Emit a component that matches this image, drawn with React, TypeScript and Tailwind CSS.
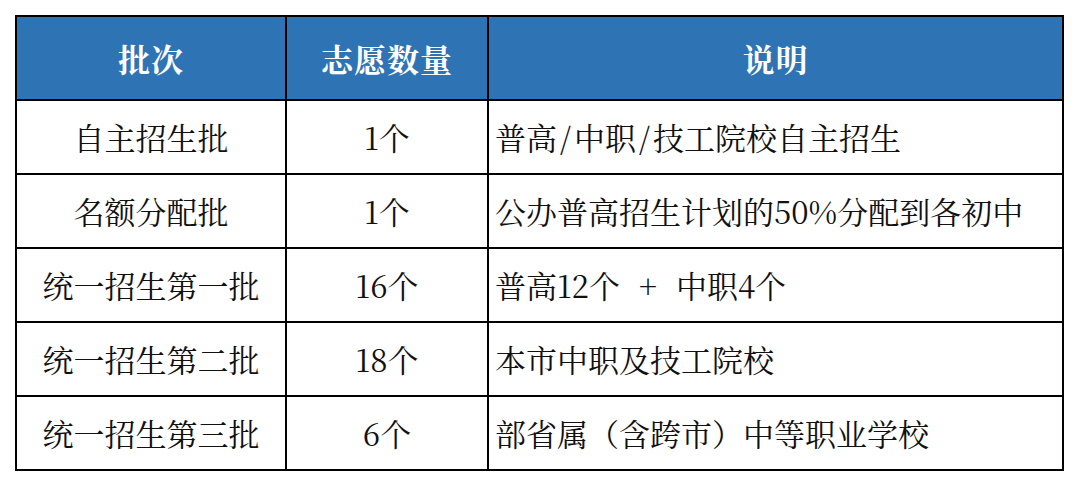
import React from "react";

const font = {
  fontFamily:
    '"Noto Serif CJK SC", "Liberation Serif", "Noto Sans CJK SC", serif',
};

const Slash = () => <span className="inline-block w-[17px] text-center">/</span>;

const rows: [string, string, React.ReactNode][] = [
  [
    "自主招生批",
    "1个",
    <>
      普高<Slash />中职<Slash />技工院校自主招生
    </>,
  ],
  ["名额分配批", "1个", "公办普高招生计划的50%分配到各初中"],
  [
    "统一招生第一批",
    "16个",
    <>
      普高12个<span className="inline-block w-[56px] text-center">+</span>中职4个
    </>,
  ],
  ["统一招生第二批", "18个", "本市中职及技工院校"],
  ["统一招生第三批", "6个", "部省属（含跨市）中等职业学校"],
];

export default function App() {
  return (
    <div className="w-[1080px] h-[486px] bg-white pt-[15px] pl-[15px]" style={font}>
      <div className="grid grid-cols-[268px_200px_573px] auto-rows-[72px] grid-rows-[82px] gap-[2px] bg-black p-[2px] w-[1049px]">
        {["批次", "志愿数量", "说明"].map((h) => (
          <div
            key={h}
            className="bg-[#2e74b5] flex items-center justify-center text-white text-[32px] font-bold tracking-[1px]"
          >
            {h}
          </div>
        ))}
        {rows.map(([a, b, c]) => (
          <React.Fragment key={a}>
            <div className="bg-white flex items-center justify-center text-[31px] text-[#111]">
              {a}
            </div>
            <div className="bg-white flex items-center justify-center text-[31px] text-[#111]">
              {b}
            </div>
            <div className="bg-white flex items-center pl-[6px] text-[31px] text-[#111] whitespace-pre">
              <span>{c}</span>
            </div>
          </React.Fragment>
        ))}
      </div>
    </div>
  );
}
